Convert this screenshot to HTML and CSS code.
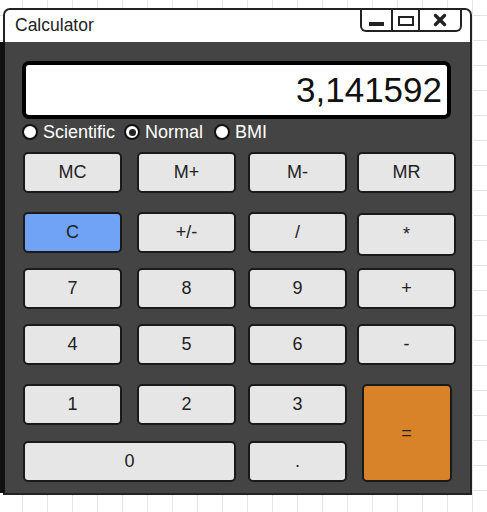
FILE: index.html
```html
<!DOCTYPE html>
<html>
<head>
<meta charset="utf-8">
<link rel="stylesheet" href="styles.css">
</head>
<body>
<div class="window">
  <div class="titlebar">
    <span class="title">Calculator</span>
    <div class="winbtns">
      <span class="wb wb-min"><span class="min-bar"></span></span>
      <span class="wb wb-max"><span class="max-box"></span></span>
      <span class="wb wb-close">
        <svg width="14" height="14" viewBox="0 0 14 14"><path d="M2.5 2.5 L11.5 11.5 M11.5 2.5 L2.5 11.5" stroke="#222" stroke-width="3.4" stroke-linecap="round"/></svg>
      </span>
    </div>
  </div>
  <div class="content">
    <div class="display">3,141592</div>
    <div class="modes">
      <span class="mode"><span class="radio"></span>Scientific</span>
      <span class="mode"><span class="radio checked"></span>Normal</span>
      <span class="mode"><span class="radio"></span>BMI</span>
    </div>
    <div class="keys">
      <button class="key">MC</button>
      <button class="key">M+</button>
      <button class="key">M-</button>
      <button class="key">MR</button>
      <button class="key key-c">C</button>
      <button class="key">+/-</button>
      <button class="key">/</button>
      <button class="key key-tall">*</button>
      <button class="key">7</button>
      <button class="key">8</button>
      <button class="key">9</button>
      <button class="key">+</button>
      <button class="key">4</button>
      <button class="key">5</button>
      <button class="key">6</button>
      <button class="key">-</button>
      <button class="key">1</button>
      <button class="key">2</button>
      <button class="key">3</button>
      <button class="key key-eq">=</button>
      <button class="key key-zero">0</button>
      <button class="key">.</button>
    </div>
  </div>
</div>
</body>
</html>
```
FILE: styles.css
```css
html, body {
  margin: 0;
  height: 100%;
}
body {
  padding: 8px 0 0 3px;
  box-sizing: border-box;
  font-family: "Liberation Sans", Arial, sans-serif;
  background-color: #ffffff;
  background-image:
    linear-gradient(to right, #e4e4e4 1px, transparent 1px),
    linear-gradient(to bottom, #e4e4e4 1px, transparent 1px);
  background-size: 25px 25px;
  background-position: 22px 15px;
}
.window {
  width: 469px;
  box-sizing: border-box;
  border: 2px solid #222;
  border-radius: 7px 7px 0 0;
  background: #444;
}
.titlebar {
  height: 32px;
  background: #fff;
  border-radius: 5px 5px 0 0;
  display: flex;
  justify-content: space-between;
  align-items: flex-start;
  padding: 0 8px 0 10px;
}
.title {
  font-size: 17.5px;
  color: #222;
  line-height: 30px;
}
.winbtns {
  display: flex;
  height: 22px;
  box-sizing: border-box;
  border: 2px solid #222;
  border-top: none;
  border-radius: 0 0 6px 6px;
}
.wb {
  display: flex;
  align-items: center;
  justify-content: center;
  height: 20px;
}
.wb-min {
  width: 29px;
  border-right: 2px solid #222;
}
.min-bar {
  width: 15px;
  height: 4px;
  background: #222;
  margin-top: 7px;
}
.wb-max {
  width: 25px;
  border-right: 2px solid #222;
}
.max-box {
  width: 12px;
  height: 6px;
  border: 2px solid #222;
  margin-top: 2px;
}
.wb-close {
  width: 40px;
}
.content {
  height: 451px;
  box-sizing: border-box;
  padding: 19px 0 0 17px;
  background: #444;
  box-shadow: -5px 0 0 #111;
}
.display {
  width: 429px;
  height: 58px;
  box-sizing: border-box;
  border: 4px solid #000;
  border-radius: 7px;
  background: #fff;
  font-size: 35px;
  color: #111;
  text-align: right;
  line-height: 49px;
  padding-right: 5px;
}
.modes {
  display: flex;
  align-items: center;
  height: 20px;
  margin-top: 3px;
  margin-bottom: 10px;
}
.mode {
  display: flex;
  align-items: center;
  color: #fff;
  font-size: 18px;
  margin-right: 9px;
}
.mode + .mode + .mode {
  margin-left: 2px;
}
.radio {
  width: 16px;
  height: 16px;
  box-sizing: border-box;
  border-radius: 50%;
  background: #fff;
  border: 2px solid #111;
  margin-right: 5px;
  position: relative;
}
.radio.checked::after {
  content: "";
  position: absolute;
  left: 2.5px;
  top: 2.5px;
  width: 7px;
  height: 7px;
  border-radius: 50%;
  background: #222;
}
.keys {
  display: grid;
  grid-template-columns: 114px 111px 109px 99px;
  grid-template-rows: 60px 56px 56px 60px 57px 41px;
  margin-left: 1px;
}
.key {
  width: 99px;
  height: 41px;
  box-sizing: border-box;
  border: 2px solid #1a1a1a;
  border-radius: 5px;
  background: #e6e6e6;
  font-family: "Liberation Sans", Arial, sans-serif;
  font-size: 18px;
  color: #222;
  padding: 0;
  align-self: start;
}
.key-tall {
  height: 43px;
  margin-top: 1px;
}
.key-c {
  background: #70a2f6;
}
.key-eq {
  grid-column: 4;
  grid-row: 5 / span 2;
  width: 90px;
  height: 98px;
  justify-self: center;
  background: #d8822a;
}
.key-zero {
  grid-column: 1 / span 2;
  width: 213px;
}
```
